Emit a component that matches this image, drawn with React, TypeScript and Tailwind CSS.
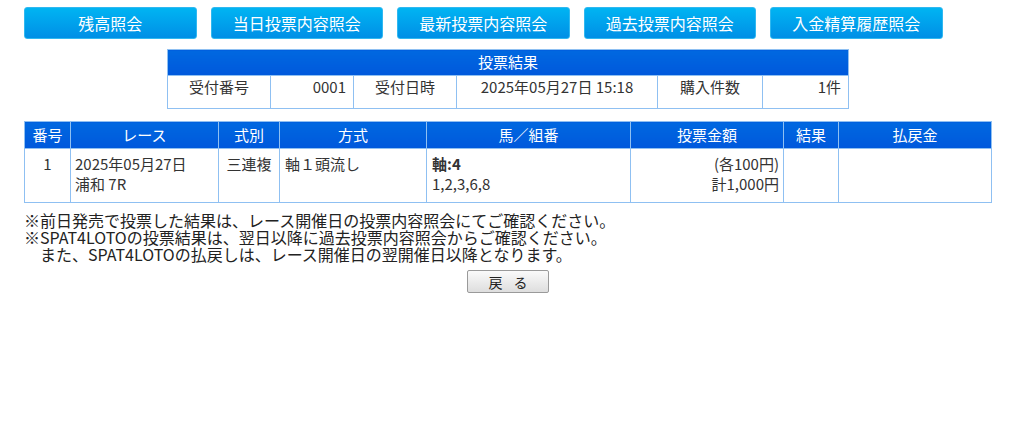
const font = { fontFamily: '"Noto Sans CJK JP", "Noto Sans", sans-serif' }

const navButtons = ["残高照会", "当日投票内容照会", "最新投票内容照会", "過去投票内容照会", "入金精算履歴照会"]

const headCell =
  "border border-[#8fc0f2] bg-gradient-to-b from-[#0068e0] to-[#0058dc] text-white font-normal text-[15px] text-center p-0"
const bodyCell = "border border-[#8fc0f2] text-[#333] text-[15px] align-top"

export default function App() {
  return (
    <div className="w-[1024px] h-[436px] bg-white text-[#333]" style={font}>
      {/* Top nav buttons */}
      <div className="flex gap-[14px] pl-[24px] pt-[7px]">
        {navButtons.map((label) => (
          <button
            key={label}
            className="w-[172.5px] h-[32px] rounded-[3px] border border-[#30b8f0] bg-gradient-to-b from-[#00b4f2] to-[#008fe6] text-white text-[16px] leading-none"
          >
            {label}
          </button>
        ))}
      </div>

      {/* 投票結果 summary */}
      <div className="mt-[10px] ml-[167px]">
        <table className="table-fixed border-collapse w-[681px]">
          <colgroup>
            <col className="w-[103px]" />
            <col className="w-[83px]" />
            <col className="w-[103px]" />
            <col className="w-[201px]" />
            <col className="w-[105px]" />
            <col className="w-[86px]" />
          </colgroup>
          <thead>
            <tr className="h-[26px]">
              <th colSpan={6} className={headCell}>
                投票結果
              </th>
            </tr>
          </thead>
          <tbody>
            <tr className="h-[33px]">
              <td className={`${bodyCell} align-middle text-center`}>受付番号</td>
              <td className={`${bodyCell} align-middle text-right pr-[7px]`}>0001</td>
              <td className={`${bodyCell} align-middle text-center`}>受付日時</td>
              <td className={`${bodyCell} align-middle text-center`}>2025年05月27日 15:18</td>
              <td className={`${bodyCell} align-middle text-center`}>購入件数</td>
              <td className={`${bodyCell} align-middle text-right pr-[7px]`}>1件</td>
            </tr>
          </tbody>
        </table>
      </div>

      {/* 明細 */}
      <div className="px-[24px] mt-[12px]">
        <table className="table-fixed border-collapse w-[967px]">
          <colgroup>
            <col className="w-[46px]" />
            <col className="w-[148px]" />
            <col className="w-[61px]" />
            <col className="w-[147px]" />
            <col className="w-[204px]" />
            <col className="w-[153px]" />
            <col className="w-[55px]" />
            <col className="w-[153px]" />
          </colgroup>
          <thead>
            <tr className="h-[27px]">
              <th className={headCell}>番号</th>
              <th className={headCell}>レース</th>
              <th className={headCell}>式別</th>
              <th className={headCell}>方式</th>
              <th className={headCell}>馬／組番</th>
              <th className={headCell}>投票金額</th>
              <th className={headCell}>結果</th>
              <th className={headCell}>払戻金</th>
            </tr>
          </thead>
          <tbody>
            <tr className="h-[54px] leading-[20px]">
              <td className={`${bodyCell} text-center pt-[5px]`}>1</td>
              <td className={`${bodyCell} px-[4px] pt-[5px]`}>
                2025年05月27日
                <br />
                浦和 7R
              </td>
              <td className={`${bodyCell} text-center pt-[5px]`}>三連複</td>
              <td className={`${bodyCell} px-[5px] pt-[5px]`}>軸１頭流し</td>
              <td className={`${bodyCell} px-[5px] pt-[5px]`}>
                <span className="font-bold">軸:4</span>
                <br />
                1,2,3,6,8
              </td>
              <td className={`${bodyCell} text-right pr-[4px] pt-[5px]`}>
                (各100円)
                <br />
                計1,000円
              </td>
              <td className={bodyCell}></td>
              <td className={bodyCell}></td>
            </tr>
          </tbody>
        </table>
      </div>

      {/* 注意書き */}
      <div className="pl-[24px] mt-[9px] text-[16px] leading-[17px] text-[#222]">
        <p>※前日発売で投票した結果は、レース開催日の投票内容照会にてご確認ください。</p>
        <p>※SPAT4LOTOの投票結果は、翌日以降に過去投票内容照会からご確認ください。</p>
        <p className="pl-[16px]">また、SPAT4LOTOの払戻しは、レース開催日の翌開催日以降となります。</p>
      </div>

      <div className="flex justify-center mt-[7px] pr-[8px]">
        <button className="w-[82px] h-[23px] rounded-[2px] border border-[#9a9a9a] bg-gradient-to-b from-[#fafafa] to-[#dedede] text-[14px] leading-none text-[#222] tracking-[0.8em] pl-[0.8em]">
          戻る
        </button>
      </div>
    </div>
  )
}
